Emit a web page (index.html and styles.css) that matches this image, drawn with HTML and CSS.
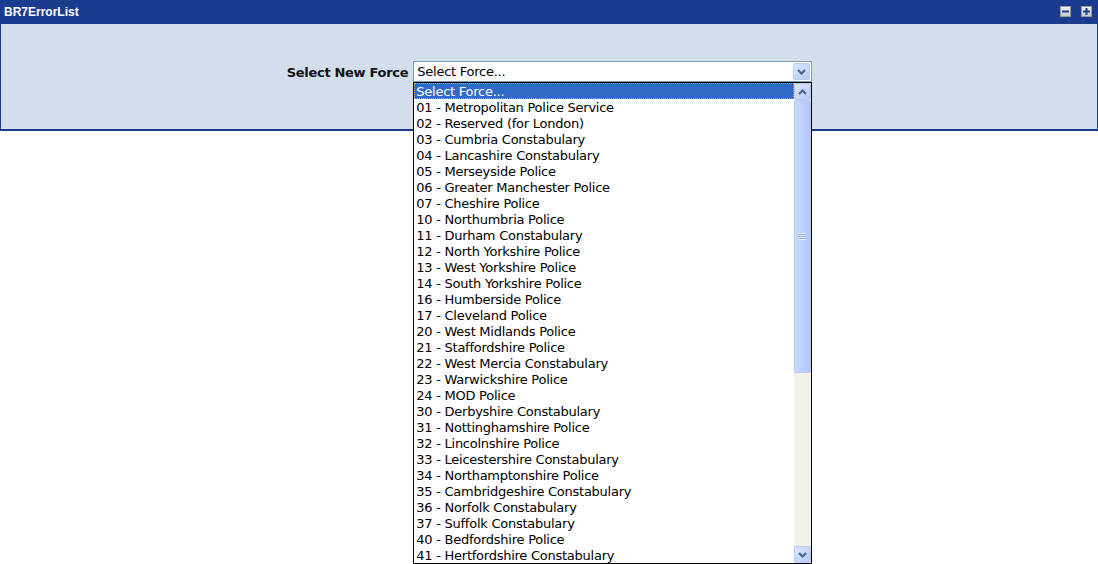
FILE: index.html
```html
<!DOCTYPE html>
<html>
<head>
<meta charset="utf-8">
<link rel="stylesheet" href="styles.css">
</head>
<body>
<div class="panel">
  <div class="panel-head">
    <span class="title">BR7ErrorList</span>
    <span class="tools">
      <span class="tool"><svg width="11" height="11" viewBox="0 0 11 11"><rect x="2" y="4.5" width="7" height="2" fill="#1a3c8f"/></svg></span>
      <span class="tool"><svg width="11" height="11" viewBox="0 0 11 11"><rect x="2" y="4.5" width="7" height="2" fill="#1a3c8f"/><rect x="4.5" y="2" width="2" height="7" fill="#1a3c8f"/></svg></span>
    </span>
  </div>
  <div class="panel-body">
    <div class="row">
      <label class="lbl">Select New Force</label>
      <div class="combo">
        <div class="combo-box">
          <span class="combo-text">Select Force...</span>
          <span class="btn"><svg width="9" height="6" viewBox="0 0 9 6"><path d="M1 1 L4.5 4.5 L8 1" stroke="#4d6185" stroke-width="2" fill="none"/></svg></span>
        </div>
        <div class="dropdown">
          <ul class="opts">
            <li class="sel">Select Force...</li>
            <li>01 - Metropolitan Police Service</li>
            <li>02 - Reserved (for London)</li>
            <li>03 - Cumbria Constabulary</li>
            <li>04 - Lancashire Constabulary</li>
            <li>05 - Merseyside Police</li>
            <li>06 - Greater Manchester Police</li>
            <li>07 - Cheshire Police</li>
            <li>10 - Northumbria Police</li>
            <li>11 - Durham Constabulary</li>
            <li>12 - North Yorkshire Police</li>
            <li>13 - West Yorkshire Police</li>
            <li>14 - South Yorkshire Police</li>
            <li>16 - Humberside Police</li>
            <li>17 - Cleveland Police</li>
            <li>20 - West Midlands Police</li>
            <li>21 - Staffordshire Police</li>
            <li>22 - West Mercia Constabulary</li>
            <li>23 - Warwickshire Police</li>
            <li>24 - MOD Police</li>
            <li>30 - Derbyshire Constabulary</li>
            <li>31 - Nottinghamshire Police</li>
            <li>32 - Lincolnshire Police</li>
            <li>33 - Leicestershire Constabulary</li>
            <li>34 - Northamptonshire Police</li>
            <li>35 - Cambridgeshire Constabulary</li>
            <li>36 - Norfolk Constabulary</li>
            <li>37 - Suffolk Constabulary</li>
            <li>40 - Bedfordshire Police</li>
            <li>41 - Hertfordshire Constabulary</li>
          </ul>
          <div class="sbar">
            <span class="sbtn"><svg width="9" height="6" viewBox="0 0 9 6"><path d="M1 5 L4.5 1.5 L8 5" stroke="#4d6185" stroke-width="2" fill="none"/></svg></span>
            <div class="track">
              <div class="thumb"><span class="grip"></span></div>
            </div>
            <span class="sbtn"><svg width="9" height="6" viewBox="0 0 9 6"><path d="M1 1 L4.5 4.5 L8 1" stroke="#4d6185" stroke-width="2" fill="none"/></svg></span>
          </div>
        </div>
      </div>
    </div>
  </div>
</div>
</body>
</html>
```

FILE: styles.css
```css
html, body {
  margin: 0;
  padding: 0;
  background: #ffffff;
  font-family: "Liberation Sans", Arial, sans-serif;
}
body {
  min-height: 564px;
}
.panel {
  width: 1098px;
}
.panel-head {
  height: 24px;
  background: #1a3c8f;
  display: flex;
  align-items: center;
  justify-content: space-between;
  padding: 0 6px 0 4px;
  box-sizing: border-box;
}
.title {
  color: #ffffff;
  font-weight: bold;
  font-size: 12px;
  font-family: "Liberation Sans", Arial, sans-serif;
  margin-top: -1px;
}
.tools {
  display: flex;
  gap: 10px;
  margin-top: -1px;
}
.tool {
  width: 11px;
  height: 11px;
  background: linear-gradient(#f4f4f4, #c8c8c8);
  box-shadow: inset 0 0 0 1px #9a9a9a;
  display: block;
}
.tool svg { display: block; }
.panel-body {
  height: 107px;
  box-sizing: border-box;
  background: #d3deec;
  border: 1px solid #1a3c8f;
  border-top: none;
  border-bottom-width: 2px;
  padding-top: 37px;
  position: relative;
  z-index: 2;
}
.row {
  display: flex;
  justify-content: center;
  align-items: center;
  gap: 5px;
  padding-left: 1px;
}
.lbl {
  font-family: "DejaVu Sans", sans-serif;
  font-weight: bold;
  font-size: 13px;
  color: #111;
  letter-spacing: -0.3px;
  margin-top: 1px;
}
.combo {
  position: relative;
  width: 399px;
}
.combo-box {
  height: 21px;
  box-sizing: border-box;
  border: 1px solid #7f9db9;
  background: #fff;
  display: flex;
  align-items: center;
  justify-content: space-between;
  padding: 0 1px 0 3px;
}
.combo-text, .opts li {
  font-size: 13px;
  color: #000;
  font-family: "DejaVu Sans", sans-serif;
  letter-spacing: -0.25px;
}
.combo-text { margin-top: -1px; }
.btn, .sbtn {
  width: 17px;
  height: 17px;
  box-sizing: border-box;
  background: linear-gradient(135deg, #dbe5fe, #b7cbfa);
  border: 1px solid #b9cbf5;
  border-radius: 2px;
  display: flex;
  align-items: center;
  justify-content: center;
}
.btn svg, .sbtn svg { display: block; }
.dropdown {
  position: absolute;
  top: 21px;
  left: 0;
  width: 399px;
  height: 482px;
  box-sizing: border-box;
  border: 1px solid #000;
  background: #fff;
  display: flex;
  z-index: 5;
}
.opts {
  list-style: none;
  margin: 0;
  padding: 0;
  flex: 1;
}
.opts li {
  height: 15px;
  padding-top: 1px;
  line-height: 16px;
  padding-left: 2px;
  white-space: nowrap;
}
.opts li.sel {
  background: #316ac5;
  color: #fff;
  outline: 1px dotted #e6a23c;
  outline-offset: -1px;
}
.sbar {
  width: 17px;
  display: flex;
  flex-direction: column;
  background: #f3f1ea;
}
.track {
  flex: 1;
  padding: 0;
}
.thumb {
  height: 273px;
  box-sizing: border-box;
  background: linear-gradient(90deg, #c9d8fc, #bccefb 60%, #b2c6f8);
  border: 1px solid #b6c8f4;
  border-radius: 2px;
  display: flex;
  align-items: center;
  justify-content: center;
}
.grip {
  width: 7px;
  height: 7px;
  background: repeating-linear-gradient(#eef3ff 0 1px, #8fa9e6 1px 2px);
}
```
